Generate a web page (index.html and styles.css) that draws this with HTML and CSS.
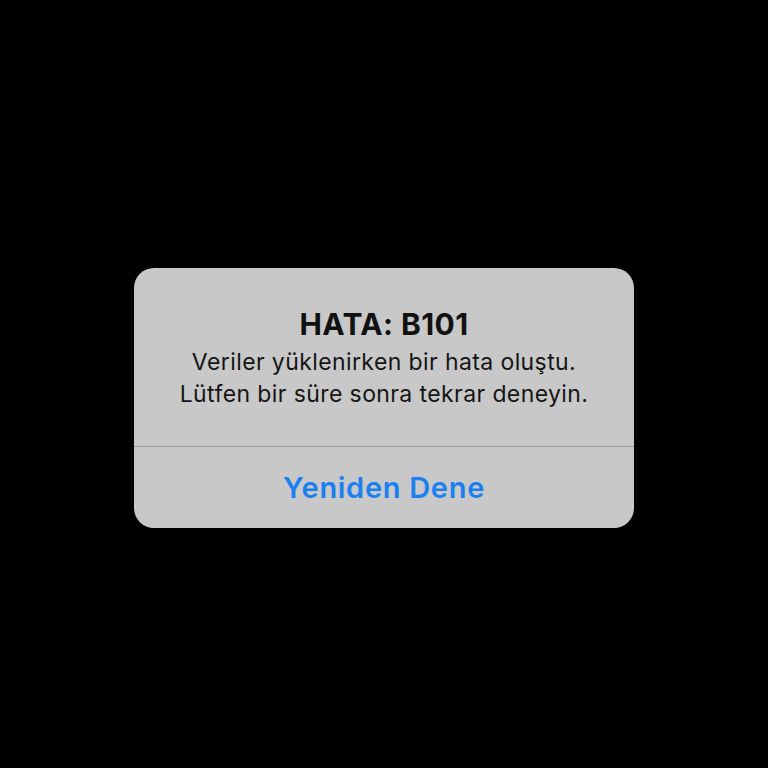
FILE: index.html
```html
<!DOCTYPE html>
<html lang="tr">
<head>
<meta charset="utf-8">
<link rel="stylesheet" href="styles.css">
</head>
<body>
<div class="alert">
  <div class="content">
    <div class="title">HATA: B101</div>
    <div class="message">Veriler yüklenirken bir hata oluştu.<br>Lütfen bir süre sonra tekrar deneyin.</div>
  </div>
  <div class="action">Yeniden Dene</div>
</div>
</body>
</html>
```
FILE: styles.css
```css
html, body {
  margin: 0;
  padding: 0;
  background: #000;
  height: 100%;
}
body {
  font-family: Inter, "Noto Sans", sans-serif;
  padding-top: 268px;
  box-sizing: border-box;
}
.alert {
  width: 500px;
  height: 260px;
  margin: 0 auto;
  background: #c8c8c8;
  border-radius: 20px;
  display: flex;
  flex-direction: column;
  overflow: hidden;
}
.content {
  height: 179px;
  flex: none;
  box-sizing: border-box;
  padding-top: 38px;
  text-align: center;
  border-bottom: 1px solid #9a9a9a;
}
.title {
  font-size: 30px;
  font-weight: 700;
  letter-spacing: 0.4px;
  color: #111;
  line-height: 36px;
}
.message {
  margin-top: 4px;
  font-size: 23px;
  letter-spacing: 0.4px;
  line-height: 32px;
  color: #151515;
}
.action {
  flex: 1;
  display: flex;
  align-items: center;
  justify-content: center;
  font-size: 29px;
  font-weight: 600;
  letter-spacing: 0.7px;
  color: #1a80f0;
}
```
